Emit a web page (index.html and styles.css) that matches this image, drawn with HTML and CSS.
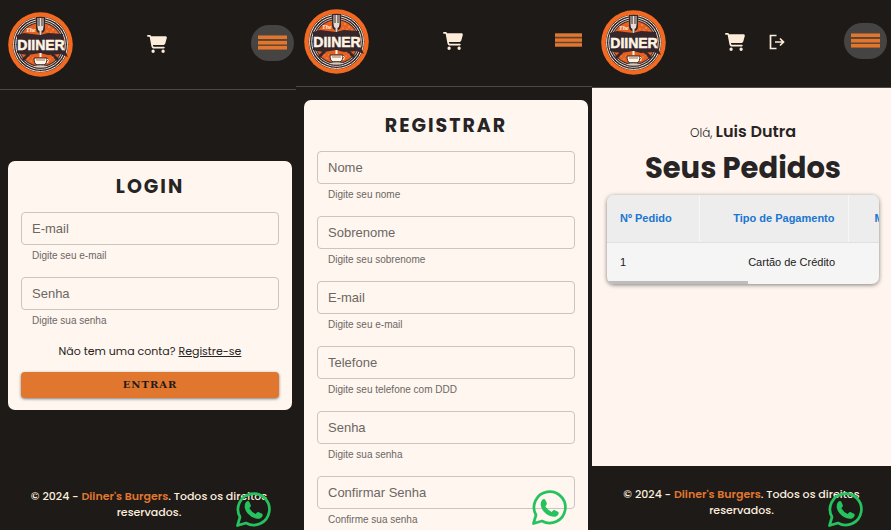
FILE: index.html
```html
<!DOCTYPE html>
<html lang="pt-BR">
<head>
<meta charset="utf-8">
<meta name="viewport" content="width=device-width, initial-scale=1">
<title>Diiner's Burgers</title>
<link rel="stylesheet" href="styles.css">
</head>
<body>
<svg class="sprite" aria-hidden="true">
  <symbol id="logo" viewBox="0 0 65 65">
    <circle cx="32.5" cy="32.5" r="32.3" fill="#f26a21"/>
    <circle cx="32.5" cy="32.5" r="27.8" fill="#35262a"/>
    <g fill="none" stroke="#eadfce">
      <circle cx="32.5" cy="32.5" r="27"/>
      <circle cx="32.5" cy="32.5" r="24.8"/>
      <circle cx="32.5" cy="32.5" r="22.8" stroke-width=".8"/>
    </g>
    <circle cx="32.5" cy="32.5" r="21.5" fill="#e8601f"/>
    <path d="M15 48l6-6M50 48l-6-6" stroke="#35262a" stroke-width="3"/>
    <g fill="#f6b98f">
      <circle cx="41" cy="15" r=".7"/><circle cx="45" cy="18" r=".7"/><circle cx="43" cy="20" r=".6"/>
      <circle cx="48" cy="21" r=".6"/><circle cx="39" cy="19" r=".6"/><circle cx="20" cy="46" r=".6"/>
      <circle cx="23" cy="49" r=".6"/><circle cx="25" cy="46" r=".6"/><circle cx="42" cy="47" r=".6"/>
      <circle cx="45" cy="45" r=".6"/><circle cx="40" cy="50" r=".6"/>
    </g>
    <path d="M28 5h9v11q0 4-3 5v4h-3v-4q-3-1-3-5z" fill="#35262a"/>
    <path d="M29.5 6v9q0 3 2 4v5h2v-5q2-1 2-4V6h-1v8h-1V6h-2v8h-1V6z" fill="#e6ddd2"/>
    <text x="18" y="20" class="logo-the">The</text>
    <path d="M9 23l7-2 16 2 8-2 15 1 1 15 4 8-7-3-13 1-8-2-12 2-7-1-4-1z" fill="#35262a"/>
    <text x="33" y="38" class="logo-name">DIINER</text>
    <path d="M32.500 41v4" stroke="#fff4e4" stroke-width="2"/>
    <path d="M26 46h13q0 6-3 7h-7q-3-1-3-7z" fill="#fff4e4" stroke="#35262a"/>
    <path d="M39 47q3 1 0 4" fill="none" stroke="#fff4e4"/>
    <path d="M28 48h9" stroke="#a36d55"/>
    <ellipse cx="32.500" cy="54.500" rx="8" ry="1.700" fill="#d8c8b8" stroke="#35262a"/>
  </symbol>
  <symbol id="cart" viewBox="0 0 576 512">
    <path d="M0 24C0 10.700 10.700 0 24 0H69.500c22 0 41.500 12.800 50.600 32h411c26.300 0 45.500 25 38.600 50.400l-41 152.300c-8.500 31.400-37 53.300-69.500 53.300H170.700l5.400 28.500c2.200 11.300 12.100 19.500 23.600 19.500H488c13.300 0 24 10.700 24 24s-10.700 24-24 24H199.700c-34.600 0-64.300-24.600-70.700-58.500L77.400 54.500c-.7-3.800-4-6.500-7.900-6.500H24C10.700 48 0 37.300 0 24zM128 464a48 48 0 1 1 96 0 48 48 0 1 1-96 0zm336-48a48 48 0 1 1 0 96 48 48 0 1 1 0-96z"/>
  </symbol>
  <symbol id="logout" viewBox="0 0 16 16">
    <path d="M7.500 1.500H1.500v13H7.500M6 8H14M11 4.500L14.500 8 11 11.500" fill="none" stroke="currentColor" stroke-width="1.700"/>
  </symbol>
  <symbol id="menu" viewBox="0 0 29 15">
    <path d="M0 0h29v15H0z" fill="#6b452c"/>
    <path d="M0 0h29v1H0zM0 4h29v1H0zM0 9h29v1H0z" fill="#464443" opacity=".6"/>
    <path d="M0 .500h29v3.500H0zM0 6h29v3.500H0zM0 11h29v3.500H0z" fill="#e1772f"/>
  </symbol>
  <symbol id="whatsapp" viewBox="0 0 35 35">
    <path d="M1.500 33.500L4 25A15.700 15.700 0 1 1 10 31z" fill="none" stroke="#25c35e" stroke-width="2.700" stroke-linejoin="round"/>
    <path d="M11 9.200q1.800-.6 2.400.8l1.500 3.500q.2 1-1.500 2.700 2.200 4 6.300 5.700 1.600-2.200 2.600-1.900l3.700 1.800q1 .5.500 2.200-1.300 3-4.800 2.800-5.700-.6-10-5.400-4.300-5-2.500-9.900.8-1.800 1.800-2.300z" fill="#25c35e"/>
  </symbol>
</svg>

<div class="screens">
  <section class="screen screen-login">
    <header class="topbar">
      <a class="logo" href="#" aria-label="Diiner"><svg><use href="#logo"/></svg></a>
      <nav class="actions"><a href="#" aria-label="Carrinho"><svg class="cart"><use href="#cart"/></svg></a></nav>
      <button class="menu menu-active" type="button" aria-label="Menu"><svg><use href="#menu"/></svg></button>
    </header>
    <main class="content centered">
      <form class="card">
        <h1>LOGIN</h1>
        <div class="field"><input id="l-email" type="email" placeholder="E-mail"><label for="l-email">Digite seu e-mail</label></div>
        <div class="field"><input id="l-senha" type="password" placeholder="Senha"><label for="l-senha">Digite sua senha</label></div>
        <p class="signup">Não tem uma conta? <a href="#">Registre-se</a></p>
        <button class="submit" type="submit">ENTRAR</button>
      </form>
    </main>
    <footer class="footer"><p>© 2024 - <strong>Diiner's Burgers</strong>. Todos os direitos reservados.</p></footer>
    <a class="whatsapp" href="#" aria-label="WhatsApp"><svg><use href="#whatsapp"/></svg></a>
  </section>

  <section class="screen screen-register">
    <header class="topbar">
      <a class="logo" href="#" aria-label="Diiner"><svg><use href="#logo"/></svg></a>
      <nav class="actions"><a href="#" aria-label="Carrinho"><svg class="cart"><use href="#cart"/></svg></a></nav>
      <button class="menu" type="button" aria-label="Menu"><svg><use href="#menu"/></svg></button>
    </header>
    <main class="content">
      <form class="card">
        <h1>REGISTRAR</h1>
        <div class="field"><input id="r-nome" type="text" placeholder="Nome"><label for="r-nome">Digite seu nome</label></div>
        <div class="field"><input id="r-sobrenome" type="text" placeholder="Sobrenome"><label for="r-sobrenome">Digite seu sobrenome</label></div>
        <div class="field"><input id="r-email" type="email" placeholder="E-mail"><label for="r-email">Digite seu e-mail</label></div>
        <div class="field"><input id="r-telefone" type="tel" placeholder="Telefone"><label for="r-telefone">Digite seu telefone com DDD</label></div>
        <div class="field"><input id="r-senha" type="password" placeholder="Senha"><label for="r-senha">Digite sua senha</label></div>
        <div class="field"><input id="r-confirmar" type="password" placeholder="Confirmar Senha"><label for="r-confirmar">Confirme sua senha</label></div>
      </form>
    </main>
    <a class="whatsapp" href="#" aria-label="WhatsApp"><svg><use href="#whatsapp"/></svg></a>
  </section>

  <section class="screen screen-orders">
    <header class="topbar">
      <a class="logo" href="#" aria-label="Diiner"><svg><use href="#logo"/></svg></a>
      <nav class="actions">
        <a href="#" aria-label="Carrinho"><svg class="cart"><use href="#cart"/></svg></a>
        <a href="#" aria-label="Sair"><svg class="logout"><use href="#logout"/></svg></a>
      </nav>
      <button class="menu menu-active" type="button" aria-label="Menu"><svg><use href="#menu"/></svg></button>
    </header>
    <main class="content orders">
      <p class="greeting">Olá, <strong>Luis Dutra</strong></p>
      <h1>Seus Pedidos</h1>
      <div class="table-card">
        <table>
          <thead><tr><th>Nº Pedido</th><th>Tipo de Pagamento</th><th>M</th></tr></thead>
          <tbody><tr><td>1</td><td>Cartão de Crédito</td><td></td></tr></tbody>
        </table>
        <div class="scroll"><div class="thumb"></div></div>
      </div>
    </main>
    <footer class="footer"><p>© 2024 - <strong>Diiner's Burgers</strong>. Todos os direitos reservados.</p></footer>
    <a class="whatsapp" href="#" aria-label="WhatsApp"><svg><use href="#whatsapp"/></svg></a>
  </section>
</div>
</body>
</html>
```
FILE: styles.css
```css
:root {
  --dark: #1e1a17;
  --cream: #fff6ef;
  --orange: #e1772f;
  --text: #262424;
  --display: Poppins, Inter, "Open Sans", sans-serif;
  --body: "Liberation Sans", Arial, sans-serif;
}

* { box-sizing: border-box; }

body {
  margin: 0;
  background: var(--dark);
  font-family: var(--display);
  color: var(--text);
}

h1, p { margin: 0; }
a { color: inherit; }
svg { display: block; }

.sprite {
  position: absolute;
  width: 0;
  height: 0;
}

.logo-the {
  font: italic bold 6px "Liberation Serif", serif;
  fill: #fff4e4;
}

.logo-name {
  font: bold 14px "Liberation Sans", sans-serif;
  fill: #fff4e4;
  stroke: #fff4e4;
  stroke-width: .5px;
  text-anchor: middle;
}

.screens {
  display: grid;
  grid-template-columns: 296fr 296fr 299fr;
  height: 100vh;
}

.screen {
  position: relative;
  display: flex;
  flex-direction: column;
  min-width: 0;
  min-height: 0;
  overflow: hidden;
}

/* Top bar */
.topbar {
  display: flex;
  align-items: center;
  flex-shrink: 0;
  padding: 12px 2px 12px 8px;
  border-bottom: 1px solid #4b4846;
}

.screen-register .topbar { padding-top: 9px; }
.screen-orders .topbar { padding: 10px 4px 12px 9px; }

.logo svg {
  width: 65px;
  height: 65px;
}

.actions {
  display: flex;
  flex: 1;
  justify-content: center;
  align-items: center;
  gap: 24px;
  padding: 0 11px 2px 0;
  color: #fdecd9;
}

.screen-orders .actions { padding-right: 0; }

.cart {
  width: 20px;
  height: 18px;
  fill: currentColor;
}

.logout {
  width: 16px;
  height: 16px;
}

.menu {
  display: grid;
  place-items: center;
  width: 43px;
  height: 36px;
  margin-bottom: 4px;
  padding: 0;
  border: 0;
  border-radius: 18px;
  background: none;
}

.menu svg {
  width: 27px;
  height: 14px;
}

.menu-active { background: #464443; }

.menu-active svg {
  width: 29px;
  height: 15px;
}

/* Forms */
.content {
  flex: 1;
  min-height: 0;
  padding: 13px 4px 0 8px;
}

.centered {
  display: flex;
  flex-direction: column;
  justify-content: center;
  padding-top: 0;
}

.card {
  padding: 12px 13px;
  border-radius: 7px;
  background: var(--cream);
}

.card h1 {
  margin-bottom: 12px;
  font-size: 19px;
  line-height: 27px;
  font-weight: 700;
  letter-spacing: 2px;
  text-align: center;
}

.field { height: 65px; }

.field input {
  display: block;
  width: 100%;
  height: 33px;
  padding: 0 10px;
  border: 1px solid #cbc5c0;
  border-radius: 4px;
  background: none;
  font: 13px var(--body);
  color: var(--text);
}

.field input::placeholder {
  color: #6b6764;
  opacity: 1;
}

.field label {
  display: block;
  padding: 3px 11px 0;
  font: 10px/15px var(--body);
  color: #6b6764;
}

.signup {
  font-size: 11px;
  line-height: 18px;
  text-align: center;
}

.submit {
  display: block;
  width: 100%;
  height: 26px;
  margin-top: 12px;
  padding: 0;
  border: 0;
  border-radius: 4px;
  background: var(--orange);
  box-shadow: 0 1px 3px rgba(0, 0, 0, .5);
  font: bold 10px "DejaVu Serif", serif;
  letter-spacing: 1px;
  color: #1e1a17;
}

/* Orders */
.orders {
  padding: 33px 12px 0 15px;
  background: #fff5ee;
}

.greeting {
  font-size: 12px;
  line-height: 22px;
  font-weight: 300;
  text-align: center;
}

.greeting strong {
  font-size: 16px;
  font-weight: 600;
}

.orders h1 {
  margin: 2px 0 4px;
  font-size: 29px;
  line-height: 45px;
  font-weight: 700;
  text-align: center;
}

.table-card {
  overflow: hidden;
  border-radius: 7px;
  background: #f5f5f5;
  box-shadow: 0 1px 4px rgba(0, 0, 0, .5);
}

table {
  width: 100%;
  table-layout: fixed;
  border-collapse: collapse;
  font: 11px var(--body);
  color: #1c1a19;
}

th, td {
  padding: 0 13px;
  text-align: right;
  white-space: nowrap;
}

th {
  height: 47px;
  border-right: 1px solid #f7f7f7;
  border-bottom: 1px solid #e0e0e0;
  background: #ededed;
  color: #1976d2;
}

td { height: 39px; }

th:first-child, td:first-child {
  width: 92px;
  text-align: left;
}

th:nth-child(2) { width: 149px; }

th:last-child {
  padding: 0 0 0 26px;
  border-right: 0;
  text-align: left;
}

.scroll { height: 3px; }

.thumb {
  width: 52%;
  height: 100%;
  background: #bdbdbd;
}

/* Footer */
.footer {
  flex-shrink: 0;
  padding: 8px 22px 10px 24px;
  font-size: 11px;
  line-height: 16px;
  font-weight: 500;
  text-align: center;
  color: #fbeedf;
}

.screen-orders .footer { padding: 20px 24px 12px; }

.footer strong {
  font-weight: 600;
  color: var(--orange);
}

.whatsapp {
  position: absolute;
  right: 25px;
  bottom: 3px;
}

.screen-register .whatsapp { bottom: 5px; }
.screen-orders .whatsapp { right: 28px; }

.whatsapp svg {
  width: 35px;
  height: 35px;
}
```
